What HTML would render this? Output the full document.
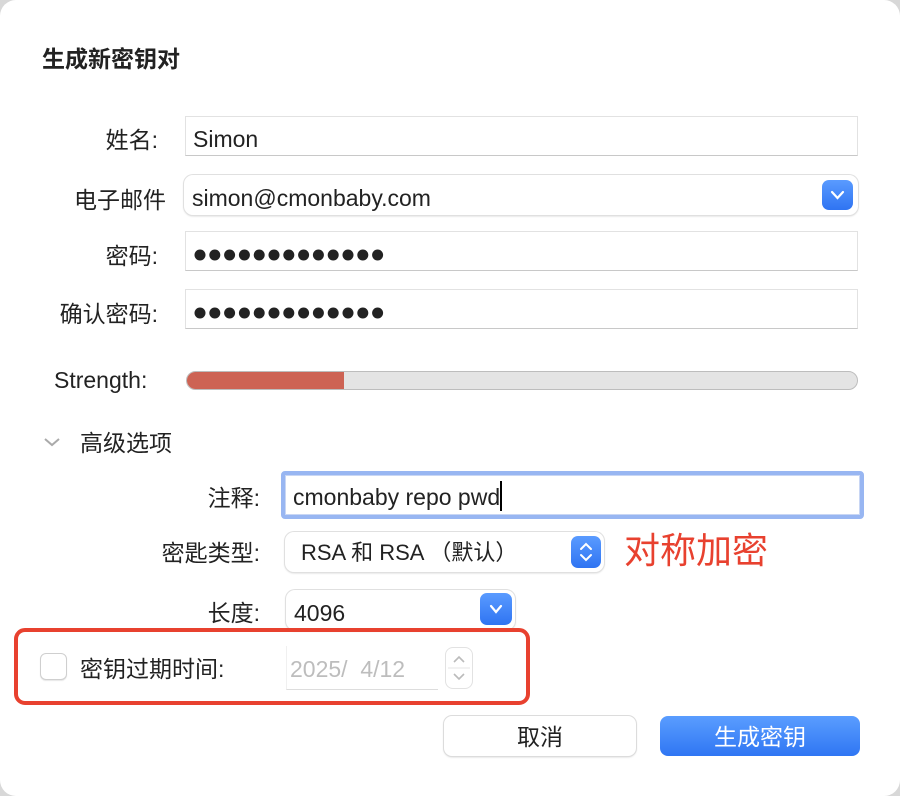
<!DOCTYPE html>
<html><head><meta charset="utf-8"><style>
*{box-sizing:border-box;margin:0;padding:0}
body{width:900px;height:796px;background:#d8d8d8;font-family:"Liberation Sans","Noto Sans CJK SC",sans-serif;color:#222;position:relative;overflow:hidden}
.win{position:absolute;left:0;top:0;width:900px;height:796px;background:#fff;border-radius:16px}
.a{position:absolute;white-space:nowrap}
.lbl{font-size:23px;text-align:right;line-height:30px}
.inp{position:absolute;background:#fff;border:1px solid #e2e2e2;border-bottom:1px solid #c8c8c8;font-size:23px;line-height:44px;padding-left:7px}
.pop{position:absolute;background:#fff;border-radius:9px;box-shadow:0 0 0 1px #e0e0e0,0 1px 2px rgba(0,0,0,.2);font-size:23px;line-height:46px;padding-left:10px}
.bb{position:absolute;border-radius:7px;background:linear-gradient(#5a9bff,#2f74f2);}
</style></head><body>
<div class="win">
<div class="a" style="left:42px;top:44px;font-size:23px;font-weight:bold;line-height:30px">生成新密钥对</div>

<div class="a lbl" style="right:742px;top:125px">姓名:</div>
<div class="inp" style="left:185px;top:116px;width:673px;height:40px">Simon</div>

<div class="a lbl" style="right:734px;top:185px">电子邮件</div>
<div class="pop" style="left:184px;top:175px;width:674px;height:40px;padding-left:8px">simon@cmonbaby.com
<div class="bb" style="left:638px;top:5px;width:31px;height:30px"><svg width="31" height="30" style="position:absolute;left:0;top:0"><path d="M10 12l5.5 6 5.5-6" stroke="#fff" stroke-width="2.2" fill="none" stroke-linecap="round"/></svg></div></div>

<div class="a lbl" style="right:742px;top:241px">密码:</div>
<div class="inp" style="left:185px;top:231px;width:673px;height:40px"><svg width="200" height="40" style="position:absolute;left:8px;top:0"><g fill="#222"><circle cx="6" cy="23" r="5.5"/><circle cx="20.8" cy="23" r="5.5"/><circle cx="35.6" cy="23" r="5.5"/><circle cx="50.4" cy="23" r="5.5"/><circle cx="65.2" cy="23" r="5.5"/><circle cx="80" cy="23" r="5.5"/><circle cx="94.8" cy="23" r="5.5"/><circle cx="109.6" cy="23" r="5.5"/><circle cx="124.4" cy="23" r="5.5"/><circle cx="139.2" cy="23" r="5.5"/><circle cx="154" cy="23" r="5.5"/><circle cx="168.8" cy="23" r="5.5"/><circle cx="183.6" cy="23" r="5.5"/></g></svg></div>

<div class="a lbl" style="right:742px;top:299px">确认密码:</div>
<div class="inp" style="left:185px;top:289px;width:673px;height:40px"><svg width="200" height="40" style="position:absolute;left:8px;top:0"><g fill="#222"><circle cx="6" cy="23" r="5.5"/><circle cx="20.8" cy="23" r="5.5"/><circle cx="35.6" cy="23" r="5.5"/><circle cx="50.4" cy="23" r="5.5"/><circle cx="65.2" cy="23" r="5.5"/><circle cx="80" cy="23" r="5.5"/><circle cx="94.8" cy="23" r="5.5"/><circle cx="109.6" cy="23" r="5.5"/><circle cx="124.4" cy="23" r="5.5"/><circle cx="139.2" cy="23" r="5.5"/><circle cx="154" cy="23" r="5.5"/><circle cx="168.8" cy="23" r="5.5"/><circle cx="183.6" cy="23" r="5.5"/></g></svg></div>

<div class="a lbl" style="left:54px;top:365px">Strength:</div>
<div class="a" style="left:186px;top:371px;width:672px;height:19px;border-radius:10px;background:#e4e4e4;border:1px solid #bdbdbd;overflow:hidden"><div style="width:157px;height:100%;background:#cd6354"></div></div>

<svg class="a" style="left:42px;top:435px" width="20" height="14"><path d="M3 4l7 6 7-6" stroke="#aaa" stroke-width="2" fill="none"/></svg>
<div class="a" style="left:80px;top:428px;font-size:23px;line-height:30px">高级选项</div>

<div class="a lbl" style="right:640px;top:483px">注释:</div>
<div class="a" style="left:281px;top:471px;width:583px;height:48px;border:4px solid #98b6f2;border-radius:4px;background:#fff">
<div style="position:absolute;left:0;top:0;right:0;bottom:0;border:1px solid #c8d6f4;font-size:23px;line-height:42px;padding-left:7px">cmonbaby repo pwd<span style="display:inline-block;width:2px;height:30px;background:#000;vertical-align:-6px"></span></div></div>

<div class="a lbl" style="right:640px;top:538px">密匙类型:</div>
<div class="pop" style="left:285px;top:532px;width:319px;height:40px;padding-left:16px;font-size:22px;line-height:42px">RSA 和 RSA （默认）
<div class="bb" style="left:286px;top:4px;width:30px;height:32px"><svg width="30" height="32" style="position:absolute;left:0;top:0"><path d="M10 13l5-5 5 5M10 19l5 5 5-5" stroke="#fff" stroke-width="2" fill="none" stroke-linecap="round"/></svg></div></div>
<div class="a" style="left:624px;top:528px;font-size:36px;line-height:46px;color:#e8412f">对称加密</div>

<div class="a lbl" style="right:640px;top:598px">长度:</div>
<div class="pop" style="left:286px;top:590px;width:229px;height:40px;padding-left:8px">4096
<div class="bb" style="left:194px;top:3px;width:32px;height:32px"><svg width="32" height="32" style="position:absolute;left:0;top:0"><path d="M11 13l5 6 5-6" stroke="#fff" stroke-width="2.2" fill="none" stroke-linecap="round"/></svg></div></div>

<div class="a" style="left:14px;top:628px;width:516px;height:77px;border:4px solid #e8412f;border-radius:11px"></div>
<div class="a" style="left:40px;top:653px;width:27px;height:27px;border:1px solid #cfcfcf;border-radius:6px;background:#fff;box-shadow:0 1px 1px rgba(0,0,0,.1)"></div>
<div class="a" style="left:80px;top:654px;font-size:23px;line-height:30px">密钥过期时间:</div>
<div class="a" style="left:286px;top:646px;width:152px;height:44px;border-bottom:1px solid #ddd;border-left:1px solid #f0f0f0;font-size:23px;line-height:46px;color:#bdbdbd;padding-left:3px">2025/&nbsp; 4/12</div>
<div class="a" style="left:446px;top:648px;width:26px;height:40px;border-radius:7px;box-shadow:0 0 0 1px #e2e2e2;background:#fff"><svg width="26" height="40"><path d="M8 14l5-5 5 5M8 26l5 5 5-5" stroke="#bbb" stroke-width="1.6" fill="none"/><path d="M2 20h22" stroke="#e6e6e6"/></svg></div>

<div class="a" style="left:444px;top:716px;width:192px;height:40px;border-radius:8px;background:#fff;box-shadow:0 0 0 1px #dcdcdc,0 1px 2px rgba(0,0,0,.2);font-size:23px;line-height:42px;text-align:center">取消</div>
<div class="a" style="left:660px;top:716px;width:200px;height:40px;border-radius:8px;background:linear-gradient(#5a9dff,#2f76f3);color:#fff;font-size:23px;line-height:42px;text-align:center">生成密钥</div>
</div>
</body></html>
